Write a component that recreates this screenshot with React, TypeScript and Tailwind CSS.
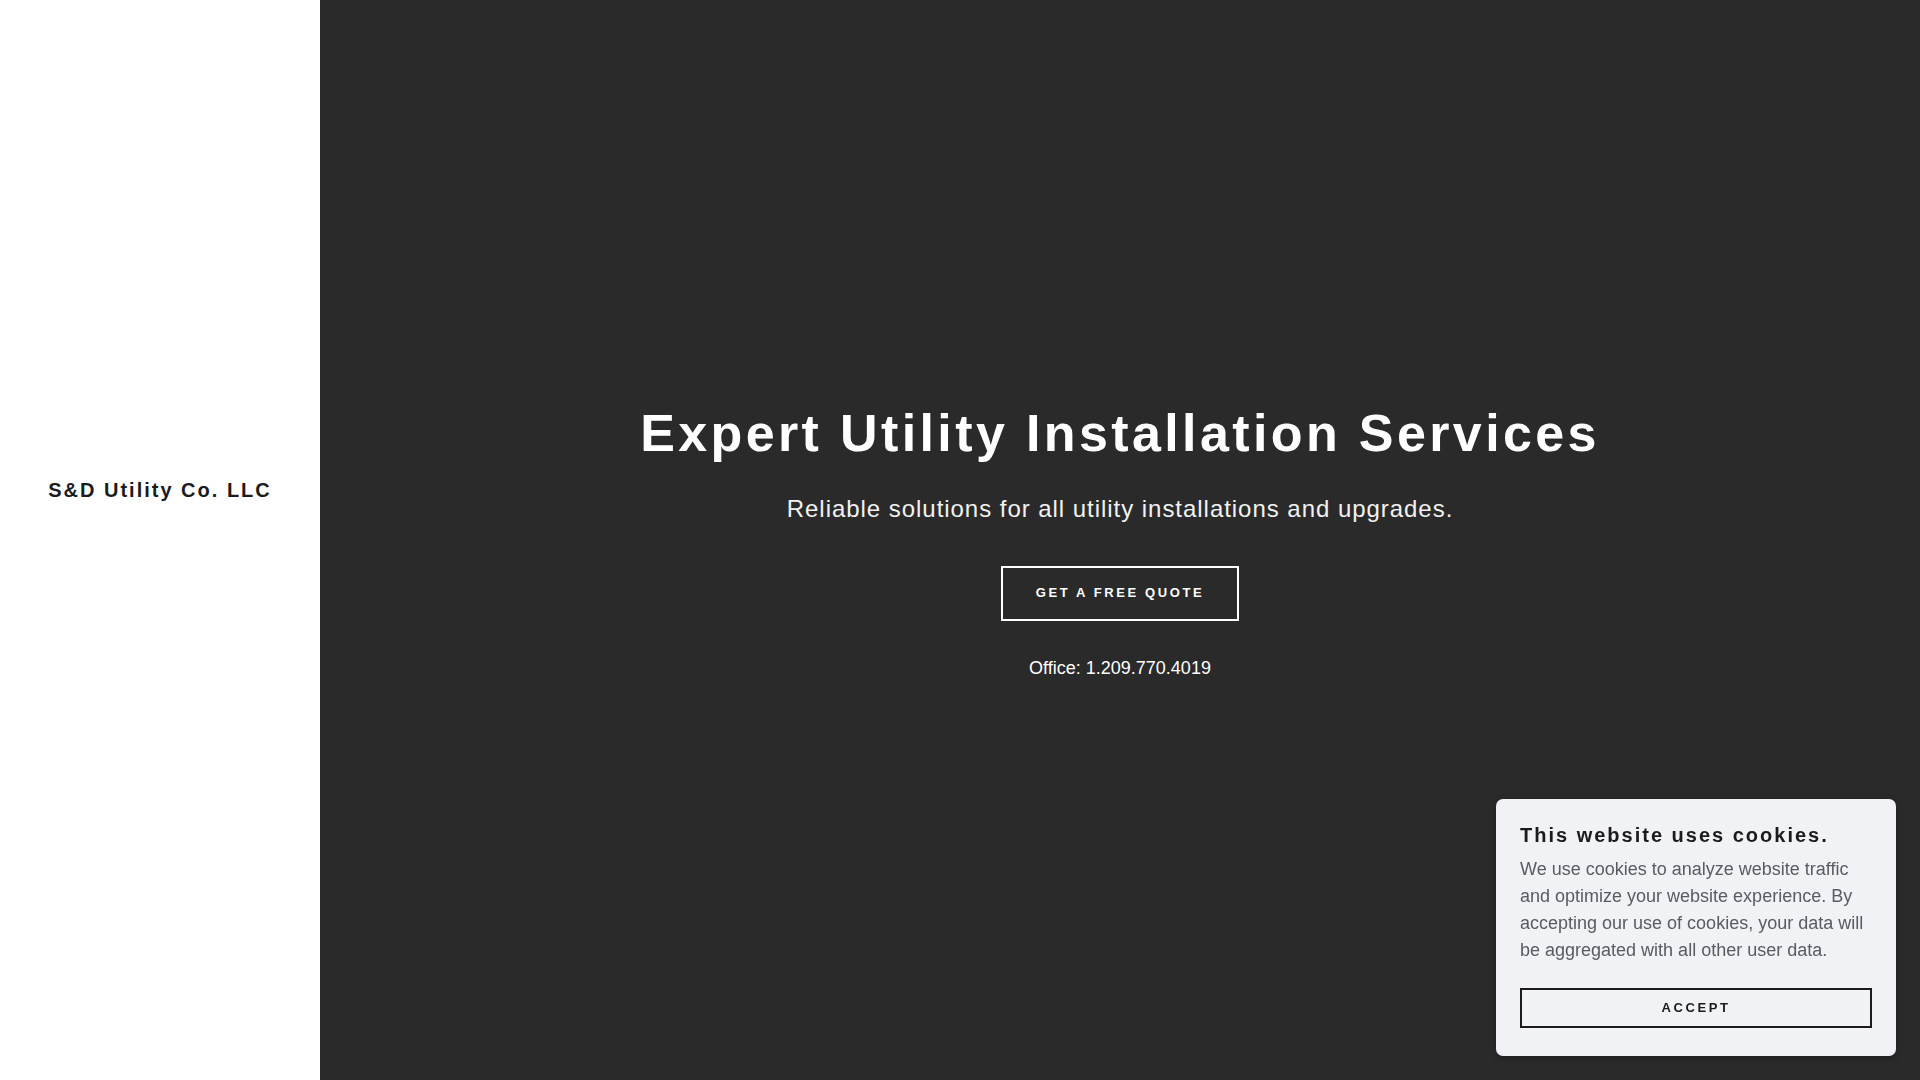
export default function App() {
  return (
    <div
      className="flex h-screen w-full overflow-hidden bg-[#2a2a2a]"
      style={{ fontFamily: '"Liberation Sans", Arial, sans-serif' }}
    >
      <aside className="flex w-[320px] shrink-0 items-center justify-center bg-white pb-[100px]">
        <div className="text-[20px] font-bold leading-[25px] tracking-[0.1em] text-[#1b1b1b]">
          S&amp;D Utility Co. LLC
        </div>
      </aside>

      <main className="flex flex-1 flex-col items-center justify-center pt-[2px] text-center text-white">
        <h1 className="text-[52px] font-bold leading-[65px] tracking-[0.065em]">
          Expert Utility Installation Services
        </h1>
        <p className="mt-[25px] text-[24px] leading-[36px] tracking-[0.04em] text-[#f2f2f2]">
          Reliable solutions for all utility installations and upgrades.
        </p>
        <button className="mt-[39px] flex h-[55px] w-[238px] items-center justify-center border-2 border-white text-[13px] font-bold tracking-[0.2em] text-white">
          GET A FREE QUOTE
        </button>
        <p className="mt-[34px] text-[18px] leading-[27px]">Office: 1.209.770.4019</p>
      </main>

      <div className="fixed bottom-6 right-6 w-[400px] rounded-[7px] bg-[#f1f2f6] px-6 pt-6 pb-7 shadow-[0_2px_6px_rgba(0,0,0,0.25)]">
        <h2 className="text-[20px] font-bold leading-[25px] tracking-[0.1em] text-[#1b1b1b]">
          This website uses cookies.
        </h2>
        <p className="mt-2 text-[18px] leading-[27px] text-[#595b61]">
          We use cookies to analyze website traffic and optimize your website experience. By
          accepting our use of cookies, your data will be aggregated with all other user data.
        </p>
        <button className="mt-6 flex h-10 w-full items-center justify-center border-2 border-[#1b1b1b] text-[13px] font-bold tracking-[0.2em] text-[#1b1b1b]">
          ACCEPT
        </button>
      </div>
    </div>
  )
}
